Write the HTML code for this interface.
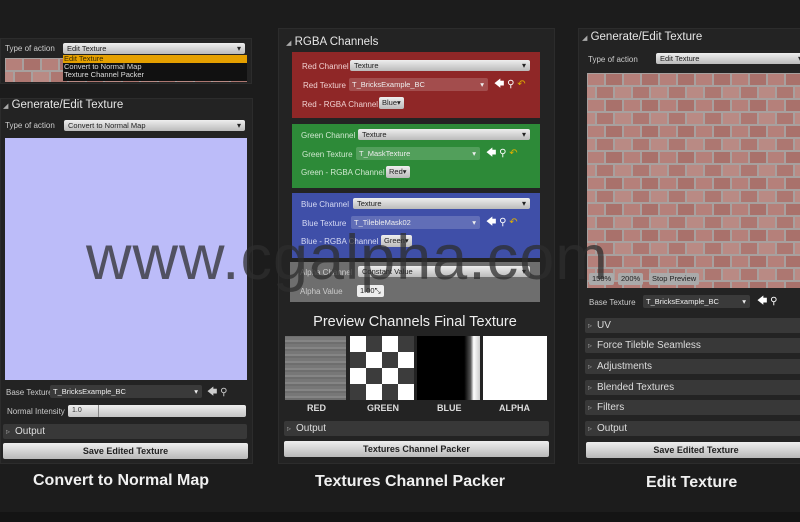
<!DOCTYPE html>
<html><head><style>
*{margin:0;padding:0;box-sizing:border-box}
body{width:800px;height:522px;background:#1c1c1c;position:relative;overflow:hidden;font-family:"Liberation Sans",sans-serif;color:#ddd}
.a{position:absolute}
.panel{position:absolute;background:#232323;border:1px solid #2c2c2c}
.lbl{position:absolute;font-size:8px;color:#ccc;white-space:nowrap}
.dd{position:absolute;height:11px;background:linear-gradient(#eee,#bbb);border-radius:2px;color:#222;font-size:7.5px;padding-left:4px;line-height:11px;white-space:nowrap}
.dd:after{content:"▾";position:absolute;right:4px;top:0;font-size:8px}
.bar{position:absolute;height:15px;background:#383838;border-radius:2px;font-size:10px;color:#ddd;line-height:15px;padding-left:12px}
.bar:before{content:"▹";position:absolute;left:3px;font-size:8px;color:#999}
.btn{position:absolute;height:16px;background:linear-gradient(#eee,#b8b8b8);border-radius:2px;color:#222;font-size:9px;font-weight:bold;text-align:center;line-height:16px}
.hdr{position:absolute;font-size:11.5px;color:#e6e6e6;white-space:nowrap}
.cap{position:absolute;font-size:16px;font-weight:bold;color:#f0f0f0;white-space:nowrap}
.tf{position:absolute;height:13px;background:rgba(255,255,255,.18);border-radius:2px;font-size:7.5px;color:#eee;line-height:13px;padding-left:3px}
.sm{position:absolute;height:12px;background:linear-gradient(#eee,#bbb);border-radius:2px;color:#222;font-size:7.5px;line-height:12px;padding:0 3px}
</style></head><body>
<svg width="0" height="0" style="position:absolute"><defs>
<pattern id="br" width="36" height="26" patternUnits="userSpaceOnUse">
<rect width="36" height="26" fill="#a8a09e"/>
<rect x="1" y="1" width="16" height="11" fill="#b5807a"/>
<rect x="19" y="1" width="16" height="11" fill="#a9716b"/>
<rect x="-8" y="14" width="16" height="11" fill="#b98a84"/>
<rect x="10" y="14" width="16" height="11" fill="#ad7771"/>
<rect x="28" y="14" width="16" height="11" fill="#b98a84"/>
</pattern></defs></svg>
<div class="a" style="left:0;top:512px;width:800px;height:10px;background:#141414"></div>

<!-- left top -->
<div class="panel" style="left:0;top:38px;width:252px;height:46px"></div>
<div class="lbl" style="left:5px;top:44px">Type of action</div>
<svg class="a" style="left:5px;top:58px" width="242" height="24"><rect width="242" height="24" fill="url(#br)"/></svg>
<div class="dd" style="left:63px;top:43px;width:182px">Edit Texture</div>
<div class="a" style="left:63px;top:55px;width:184px;height:26px;background:#111;font-size:7.5px;line-height:8px;color:#ddd">
<div style="background:#e5a000;color:#3a2a00;padding-left:1px">Edit Texture</div>
<div style="padding-left:1px">Convert to Normal Map</div>
<div style="padding-left:1px">Texture Channel Packer</div></div>

<!-- left main -->
<div class="panel" style="left:0;top:98px;width:253px;height:366px"></div>
<div class="hdr" style="left:3px;top:99px"><span style="font-size:7px;color:#aaa">◢</span> Generate/Edit Texture</div>
<div class="lbl" style="left:5px;top:121px">Type of action</div>
<div class="dd" style="left:64px;top:120px;width:181px">Convert to Normal Map</div>
<div class="a" style="left:5px;top:138px;width:242px;height:242px;background:#bcbcf9"></div>
<div class="lbl" style="left:6px;top:388px">Base Texture</div>
<div class="tf" style="left:50px;top:385px;width:152px;background:#3a3a3a">T_BricksExample_BC<span style="position:absolute;right:4px">▾</span></div>
<div class="lbl" style="left:207px;top:385px;font-size:10px">🡄 ⚲</div>
<div class="lbl" style="left:7px;top:407px">Normal Intensity</div>
<div class="a" style="left:68px;top:405px;width:178px;height:12px;background:linear-gradient(#eee,#c4c4c4);border-radius:2px;font-size:7px;color:#333;line-height:12px;padding-left:4px">1.0<div class="a" style="left:30px;top:0;width:1px;height:12px;background:#888"></div></div>
<div class="bar" style="left:3px;top:424px;width:244px">Output</div>
<div class="btn" style="left:3px;top:443px;width:245px">Save Edited Texture</div>
<div class="cap" style="left:33px;top:472px">Convert to Normal Map</div>

<!-- middle -->
<div class="panel" style="left:278px;top:28px;width:277px;height:436px"></div>
<div class="hdr" style="left:286px;top:36px"><span style="font-size:7px;color:#aaa">◢</span> RGBA Channels</div>
<div class="a" style="left:292px;top:52px;width:248px;height:66px;background:#8f2727"></div>
<div class="lbl" style="left:302px;top:62px;color:#f0d0d0">Red Channel</div>
<div class="dd" style="left:350px;top:60px;width:180px">Texture</div>
<div class="lbl" style="left:303px;top:81px;color:#f0d0d0">Red Texture</div>
<div class="tf" style="left:349px;top:78px;width:139px">T_BricksExample_BC<span style="position:absolute;right:4px">▾</span></div>
<div class="lbl" style="left:494px;top:77px;font-size:10px;color:#fff">🡄 ⚲ <span style="color:#e0b000">↶</span></div>
<div class="lbl" style="left:302px;top:100px;color:#f0d0d0">Red - RGBA Channel</div>
<div class="sm" style="left:379px;top:97px">Blue▾</div>

<div class="a" style="left:292px;top:124px;width:248px;height:64px;background:#2d8a38"></div>
<div class="lbl" style="left:301px;top:131px;color:#cfe8cf">Green Channel</div>
<div class="dd" style="left:358px;top:129px;width:172px">Texture</div>
<div class="lbl" style="left:302px;top:150px;color:#cfe8cf">Green Texture</div>
<div class="tf" style="left:356px;top:147px;width:124px">T_MaskTexture<span style="position:absolute;right:4px">▾</span></div>
<div class="lbl" style="left:486px;top:146px;font-size:10px;color:#fff">🡄 ⚲ <span style="color:#e0b000">↶</span></div>
<div class="lbl" style="left:301px;top:168px;color:#cfe8cf">Green - RGBA Channel</div>
<div class="sm" style="left:386px;top:166px">Red▾</div>

<div class="a" style="left:292px;top:193px;width:248px;height:65px;background:#3f4fa8"></div>
<div class="lbl" style="left:301px;top:200px;color:#d8dcf5">Blue Channel</div>
<div class="dd" style="left:353px;top:198px;width:177px">Texture</div>
<div class="lbl" style="left:302px;top:219px;color:#d8dcf5">Blue Texture</div>
<div class="tf" style="left:351px;top:216px;width:129px">T_TilebleMask02<span style="position:absolute;right:4px">▾</span></div>
<div class="lbl" style="left:486px;top:215px;font-size:10px;color:#fff">🡄 ⚲ <span style="color:#e0b000">↶</span></div>
<div class="lbl" style="left:301px;top:237px;color:#d8dcf5">Blue - RGBA Channel</div>
<div class="sm" style="left:381px;top:235px">Green▾</div>

<div class="a" style="left:290px;top:262px;width:250px;height:40px;background:#6e6e6e"></div>
<div class="lbl" style="left:300px;top:268px">Alpha Channel</div>
<div class="dd" style="left:358px;top:266px;width:172px">Constant Value</div>
<div class="lbl" style="left:300px;top:287px">Alpha Value</div>
<div class="sm" style="left:357px;top:285px;background:#eee">1.00⤡</div>

<div class="a" style="left:280px;top:314px;width:270px;text-align:center;font-size:14.5px;color:#eee">Preview Channels Final Texture</div>
<div class="a" style="left:285px;top:336px;width:61px;height:64px;background:repeating-linear-gradient(0deg,#6e6e6e 0 2px,#858585 2px 4px,#777 4px 7px)"></div>
<div class="a" style="left:350px;top:336px;width:64px;height:64px;background-color:#fff;background-image:conic-gradient(#3c3c3c 25%,transparent 0 50%,#3c3c3c 0 75%,transparent 0);background-size:32px 32px"></div>
<div class="a" style="left:417px;top:336px;width:63px;height:64px;background:linear-gradient(90deg,#000 75%,#555 85%,#fff 90%,#ccc)"></div>
<div class="a" style="left:483px;top:336px;width:64px;height:64px;background:#fff"></div>
<div class="a" style="left:285px;top:403px;width:262px;font-size:9px;font-weight:bold;color:#ddd">
<span class="a" style="left:22px">RED</span><span class="a" style="left:82px">GREEN</span><span class="a" style="left:152px">BLUE</span><span class="a" style="left:214px">ALPHA</span></div>
<div class="bar" style="left:284px;top:421px;width:265px">Output</div>
<div class="btn" style="left:284px;top:441px;width:265px">Textures Channel Packer</div>
<div class="cap" style="left:315px;top:473px">Textures Channel Packer</div>

<!-- right -->
<div class="panel" style="left:578px;top:28px;width:230px;height:436px"></div>
<div class="hdr" style="left:582px;top:31px"><span style="font-size:7px;color:#aaa">◢</span> Generate/Edit Texture</div>
<div class="lbl" style="left:588px;top:55px">Type of action</div>
<div class="dd" style="left:656px;top:53px;width:150px">Edit Texture</div>
<svg class="a" style="left:587px;top:73px" width="213" height="215"><rect width="213" height="215" fill="url(#br)"/></svg>
<div class="sm" style="left:589px;top:273px;background:#aaa">150%</div>
<div class="sm" style="left:618px;top:273px;background:#aaa">200%</div>
<div class="sm" style="left:649px;top:273px;background:#aaa">Stop Preview</div>
<div class="lbl" style="left:589px;top:298px">Base Texture</div>
<div class="tf" style="left:643px;top:295px;width:107px;background:#3a3a3a">T_BricksExample_BC<span style="position:absolute;right:4px">▾</span></div>
<div class="lbl" style="left:757px;top:294px;font-size:10px;color:#fff">🡄 ⚲</div>
<div class="bar" style="left:585px;top:318px;width:220px">UV</div>
<div class="bar" style="left:585px;top:338px;width:220px">Force Tileble Seamless</div>
<div class="bar" style="left:585px;top:359px;width:220px">Adjustments</div>
<div class="bar" style="left:585px;top:380px;width:220px">Blended Textures</div>
<div class="bar" style="left:585px;top:400px;width:220px">Filters</div>
<div class="bar" style="left:585px;top:421px;width:220px">Output</div>
<div class="btn" style="left:586px;top:442px;width:220px">Save Edited Texture</div>
<div class="cap" style="left:646px;top:474px">Edit Texture</div>

<div class="a" style="left:86px;top:222px;font-size:63px;color:rgba(45,45,45,.75);white-space:nowrap;letter-spacing:1px">www.cgalpha.com</div>
</body></html>
